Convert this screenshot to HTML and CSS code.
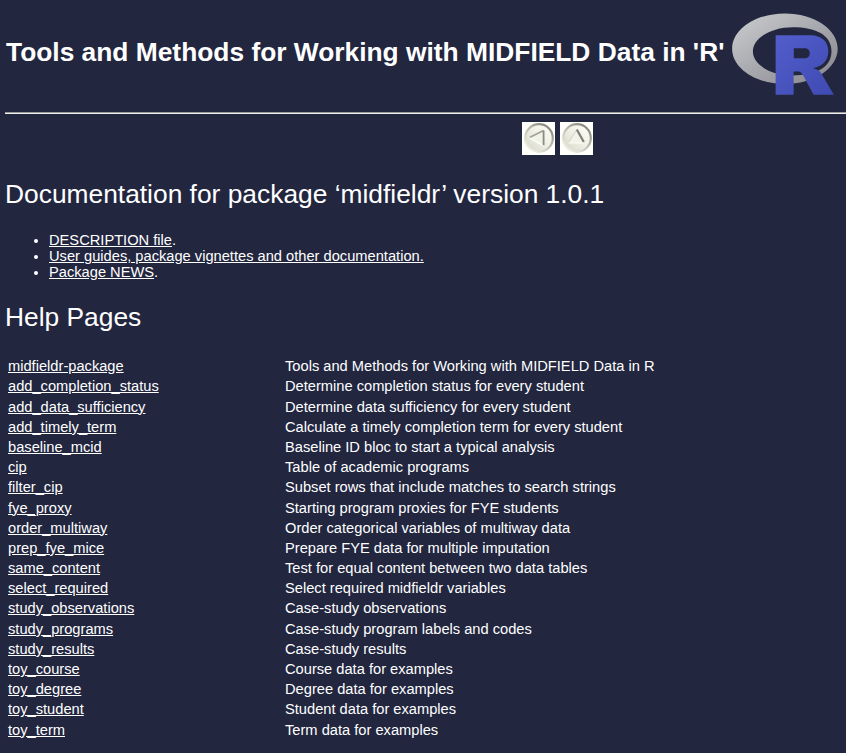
FILE: index.html
```html
<!DOCTYPE html>
<html lang="en">
<head>
<meta charset="utf-8">
<title>Tools and Methods for Working with MIDFIELD Data in 'R'</title>
<link rel="stylesheet" href="styles.css">
</head>
<body>
<div class="container">
<header class="header">
<h1>Tools and Methods for Working with MIDFIELD Data in 'R'</h1>
<svg class="logo" viewBox="0 0 724 561" preserveAspectRatio="none" role="img" aria-label="R logo">
<defs>
<linearGradient id="ring" x1="0" y1="0" x2="1" y2="1"><stop offset="0" stop-color="#cbced0"/><stop offset="1" stop-color="#84838b"/></linearGradient>
<linearGradient id="letter" x1="0" y1="0" x2="1" y2="1"><stop offset="0" stop-color="#525dcc"/><stop offset="1" stop-color="#3f4bb1"/></linearGradient>
</defs>
<path fill="url(#ring)" fill-rule="evenodd" d="M361.453,485.937C162.329,485.937,0.906,377.828,0.906,244.469C0.906,111.109,162.329,3,361.453,3C560.578,3,722,111.109,722,244.469C722,377.828,560.578,485.937,361.453,485.937ZM416.641,97.406C265.289,97.406,142.594,171.314,142.594,262.484C142.594,353.654,265.289,427.562,416.641,427.562C567.992,427.562,679.687,377.033,679.687,262.484C679.687,147.971,567.992,97.406,416.641,97.406Z"/>
<path fill="url(#letter)" fill-rule="evenodd" d="M550,377C550,377,571.822,383.585,584.5,390C588.899,392.226,596.51,396.668,602,402.5C607.378,408.212,610,414,610,414L696,559L557,559.062L492,437C492,437,478.69,414.131,470.5,407.5C463.668,401.969,460.755,400,454,400L420.974,400L421,558.974L298,559.026L298,152.938L545,152.938C545,152.938,657.5,154.967,657.5,262C657.5,369.033,550,377,550,377ZM496.5,241.024L422.037,240.976L422,310.026L496.5,310.002C496.5,310.002,531,309.895,531,274.877C531,239.155,496.5,241.024,496.5,241.024Z"/>
</svg>
</header>
<div class="rule"></div>
<nav class="nav">
<svg class="button" viewBox="0 0 33 33" role="img" aria-label="Previous">
<defs>
<linearGradient id="rim" x1="0.2" y1="0.9" x2="0.8" y2="0.1"><stop offset="0" stop-color="#ecece2"/><stop offset="0.5" stop-color="#bfc0b2"/><stop offset="1" stop-color="#8b8d80"/></linearGradient>
<linearGradient id="face" x1="0" y1="1" x2="1" y2="0"><stop offset="0" stop-color="#d3d4c4"/><stop offset="0.5" stop-color="#efefe5"/><stop offset="1" stop-color="#fffffa"/></linearGradient>
</defs>
<rect width="33" height="33" fill="#fffffb"/>
<circle cx="17" cy="16" r="13.8" fill="url(#face)" stroke="url(#rim)" stroke-width="2.2"/>
<path d="M8 15.5L21.5 8.5V23Z" fill="#f0f1e7"/>
<path d="M21.5 23.6L8 16.2" fill="none" stroke="#fffffa" stroke-width="1.2"/>
<path d="M8 15.3L21.5 8.5" fill="none" stroke="#a3a496" stroke-width="1.7"/>
<path d="M21.6 8.5V23.2" fill="none" stroke="#8b8c80" stroke-width="1.8"/>
</svg>
<svg class="button" viewBox="0 0 33 33" role="img" aria-label="Up">
<rect width="33" height="33" fill="#fffffb"/>
<circle cx="17" cy="16" r="13.8" fill="url(#face)" stroke="url(#rim)" stroke-width="2.2"/>
<path d="M8.5 20.5L16.5 8L23.5 20.5Z" fill="#f3f3ea"/>
<path d="M8.5 20.5L16.5 7.8" fill="none" stroke="#d3d4c6" stroke-width="1"/>
<path d="M8.5 21H23.5" fill="none" stroke="#fffffa" stroke-width="1"/>
<path d="M16.8 7.5L23.8 20" fill="none" stroke="#7e8073" stroke-width="2.2"/>
</svg>
</nav>
<h2>Documentation for package ‘midfieldr’ version 1.0.1</h2>
<ul>
<li><a href="#">DESCRIPTION file</a>.</li>
<li><a href="#">User guides, package vignettes and other documentation.</a></li>
<li><a href="#">Package NEWS</a>.</li>
</ul>
<h2>Help Pages</h2>
<table>
<tr><td class="topic"><a href="#">midfieldr-package</a></td><td>Tools and Methods for Working with MIDFIELD Data in R</td></tr>
<tr><td><a href="#">add_completion_status</a></td><td>Determine completion status for every student</td></tr>
<tr><td><a href="#">add_data_sufficiency</a></td><td>Determine data sufficiency for every student</td></tr>
<tr><td><a href="#">add_timely_term</a></td><td>Calculate a timely completion term for every student</td></tr>
<tr><td><a href="#">baseline_mcid</a></td><td>Baseline ID bloc to start a typical analysis</td></tr>
<tr><td><a href="#">cip</a></td><td>Table of academic programs</td></tr>
<tr><td><a href="#">filter_cip</a></td><td>Subset rows that include matches to search strings</td></tr>
<tr><td><a href="#">fye_proxy</a></td><td>Starting program proxies for FYE students</td></tr>
<tr><td><a href="#">order_multiway</a></td><td>Order categorical variables of multiway data</td></tr>
<tr><td><a href="#">prep_fye_mice</a></td><td>Prepare FYE data for multiple imputation</td></tr>
<tr><td><a href="#">same_content</a></td><td>Test for equal content between two data tables</td></tr>
<tr><td><a href="#">select_required</a></td><td>Select required midfieldr variables</td></tr>
<tr><td><a href="#">study_observations</a></td><td>Case-study observations</td></tr>
<tr><td><a href="#">study_programs</a></td><td>Case-study program labels and codes</td></tr>
<tr><td><a href="#">study_results</a></td><td>Case-study results</td></tr>
<tr><td><a href="#">toy_course</a></td><td>Course data for examples</td></tr>
<tr><td><a href="#">toy_degree</a></td><td>Degree data for examples</td></tr>
<tr><td><a href="#">toy_student</a></td><td>Student data for examples</td></tr>
<tr><td><a href="#">toy_term</a></td><td>Term data for examples</td></tr>
</table>
</div>
</body>
</html>
```
FILE: styles.css
```css
body {
  margin: 0;
  background: #22263f;
  color: #fff;
  font: 14.67px/16px "Liberation Sans", Arial, sans-serif;
}
.container { padding-left: 5px; }
.header { display: flex; height: 112px; align-items: flex-start; }
h1 { margin: 37px 0 0 1px; width: 726px; font-size: 26.35px; line-height: 30px; white-space: nowrap; }
.logo { width: 106px; height: 82px; margin-top: 13px; }
.rule { height: 1px; background: #9a9a9a; border-bottom: 1px solid #eee; }
.nav { display: flex; gap: 5px; height: 33px; margin-top: 8px; padding-left: 517px; }
.button { width: 33px; height: 33px; }
h2 { margin: 24px 0 0; font-size: 26.36px; line-height: 30px; font-weight: 400; }
ul { margin: 23px 0 0; padding-left: 44px; }
ul + h2 { margin-top: 22px; }
a { color: #fff; text-decoration: underline; }
table { margin-top: 23.21px; border-spacing: 2px; }
td { padding: 1px; height: 16.1875px; line-height: 16.1875px; vertical-align: top; }
.topic { width: 273px; }
```
